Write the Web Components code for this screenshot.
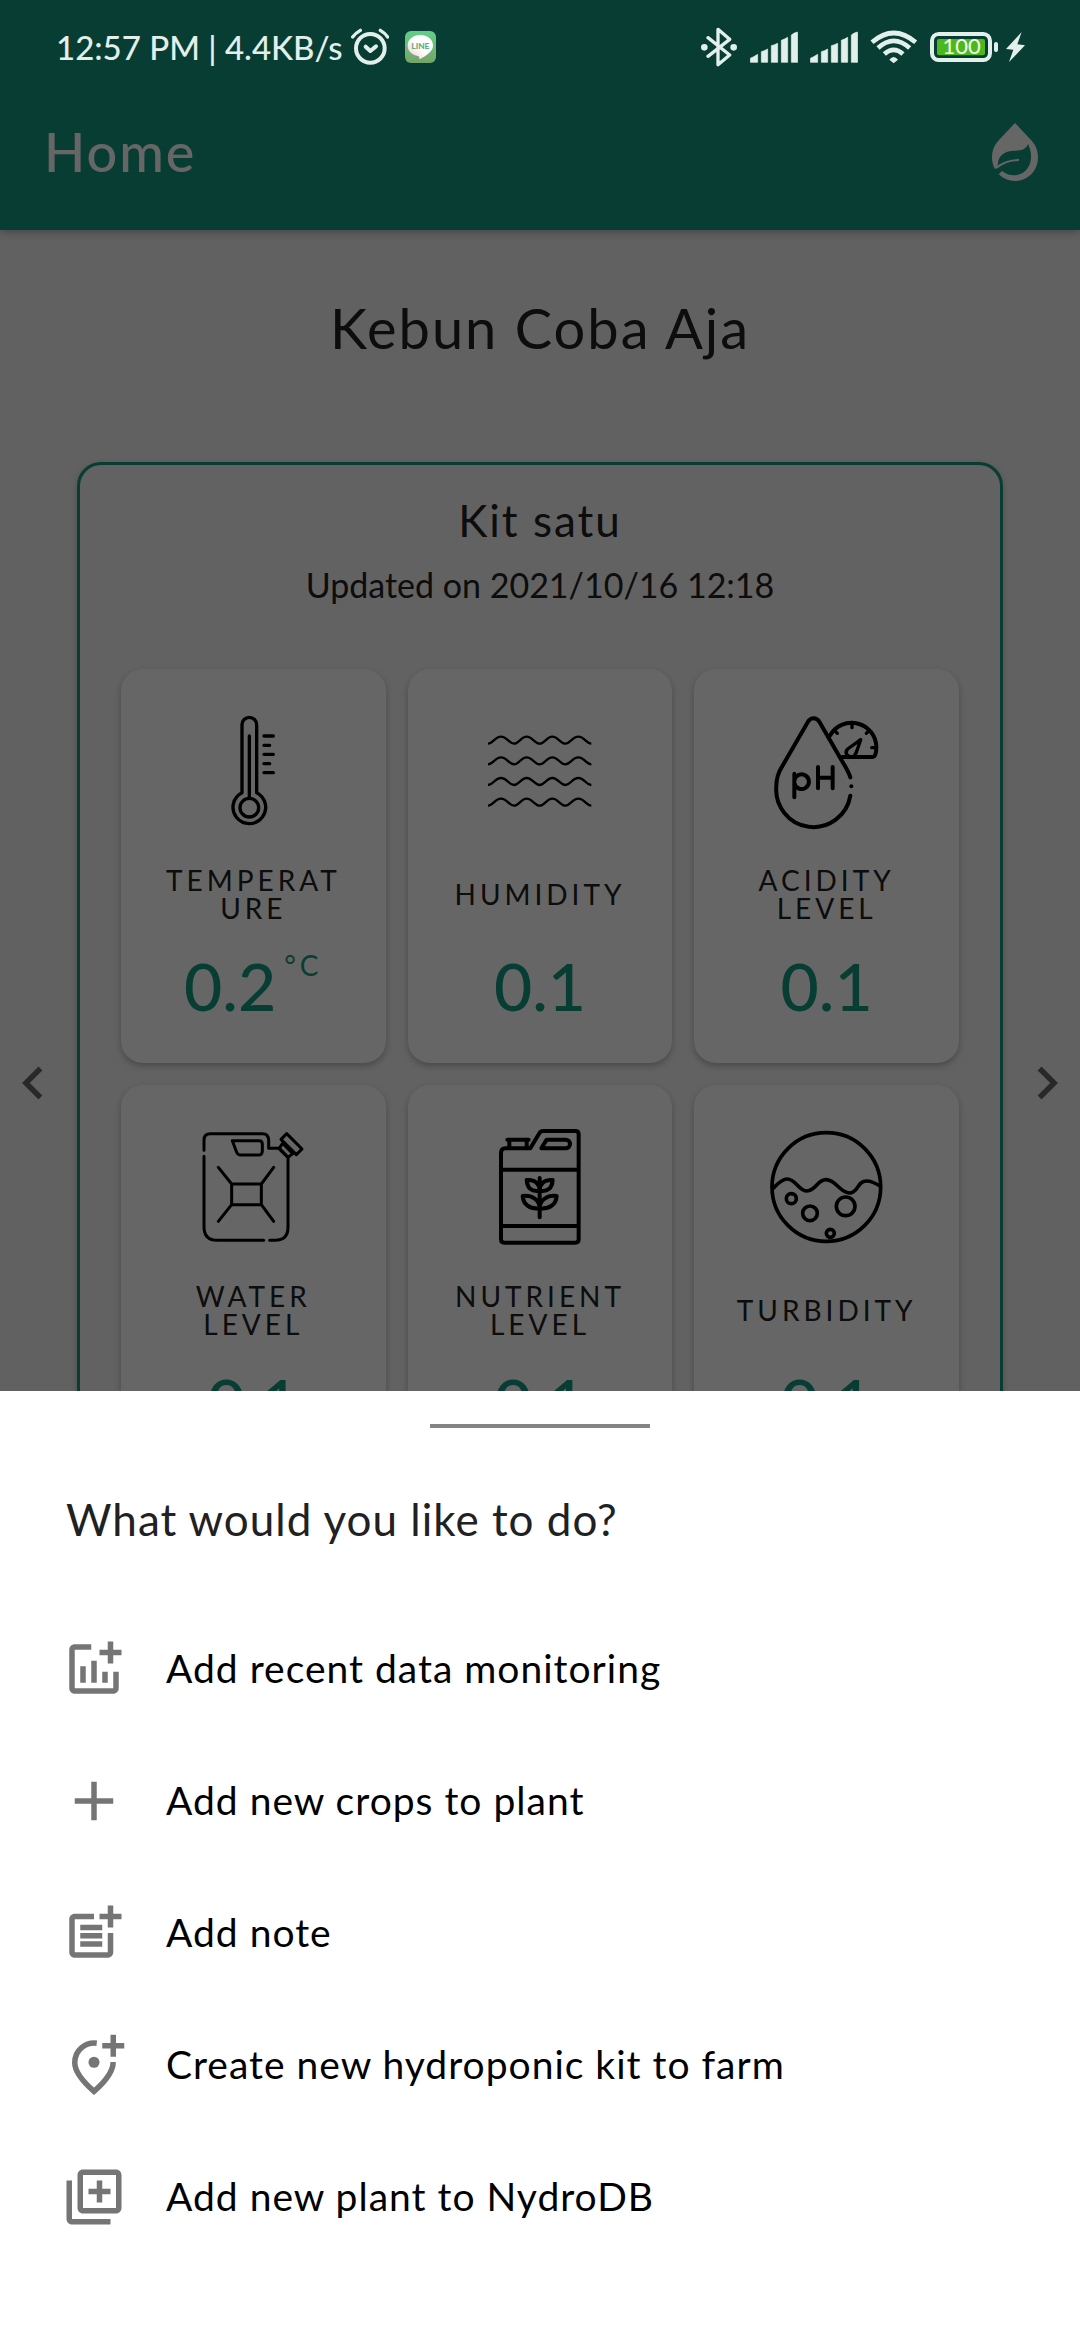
<!DOCTYPE html>
<html lang="en">
<head>
<meta charset="utf-8">
<meta name="viewport" content="width=device-width, initial-scale=1">
<title>Home</title>
<style>
  html, body { margin: 0; height: 100%; }
  body { font-family: Lato, "Open Sans", sans-serif; color: #212121; background: #f2f2f2; }
</style>
</head>
<body>
<nydro-app>
  <status-bar slot="status" time="12:57 PM" speed="4.4KB/s" battery="100"></status-bar>
  <app-bar slot="bar">Home</app-bar>
  <farm-view slot="page" name="Kebun Coba Aja">
    <kit-card name="Kit satu" updated="Updated on 2021/10/16 12:18">
      <metric-card label="Temperature" value="0.2" unit="°C">
        <svg viewBox="279 153 360 360" fill="none" stroke="#000" stroke-width="10" stroke-linecap="round" aria-hidden="true">
          <path d="M426 398V194a22 22 0 0 1 44 0V398a49 49 0 1 1-44 0Z" stroke-linejoin="round"/>
          <circle cx="448" cy="443" r="28"/><path d="M448 228V412"/>
          <path d="M492 228h28M492 256h17M492 283h28M492 311h17M492 338h28"/>
        </svg>
      </metric-card>
      <metric-card label="Humidity" value="0.1">
        <svg viewBox="238 153 360 360" fill="none" stroke="#000" stroke-width="7" aria-hidden="true">
          <path d="M262 251C277 251 283 230 301 230S325 251 340 251 361 230 378 230 402 251 417 251 438 230 455 230 479 251 494 251 515 230 533 230 557 251 572 251"/>
          <path d="M262 313C277 313 283 292 301 292S325 313 340 313 361 292 378 292 402 313 417 313 438 292 455 292 479 313 494 313 515 292 533 292 557 313 572 313"/>
          <path d="M262 375C277 375 283 354 301 354S325 375 340 375 361 354 378 354 402 375 417 375 438 354 455 354 479 375 494 375 515 354 533 354 557 375 572 375"/>
          <path d="M262 437C277 437 283 416 301 416S325 437 340 437 361 416 378 416 402 437 417 437 438 416 455 416 479 437 494 437 515 416 533 416 557 437 572 437"/>
        </svg>
      </metric-card>
      <metric-card label="Acidity Level" value="0.1">
        <svg viewBox="260 153 360 360" fill="none" stroke="#000" stroke-width="12" stroke-linecap="round" stroke-linejoin="round" aria-hidden="true">
          <path d="M510 352C504 334 496 322 488 308L417 185C409 171 391 171 383 185L305 320C295 336 288 354 288 378A112 113 0 0 0 510 407"/>
          <path d="M449 227A74 74 0 0 1 588 260C588 280 584 291 577 291H486"/>
          <path d="M515 187v16M464 213l7 7M565 213l-7 7M588 263h-14" stroke-width="10"/>
          <path d="M541 239L502 267C490 280 504 294 519 289C526 287 528 277 541 239Z" stroke-width="10"/>
          <path d="M342 341V412M342 362a22 22 0 1 1 0 6M413 321V385M457 321V385M413 353H457"/>
          <circle cx="513" cy="379" r="6" fill="#000" stroke="none"/>
        </svg>
      </metric-card>
      <metric-card label="Water Level" value="0.1">
        <svg viewBox="279 171 360 360" fill="none" stroke="#000" stroke-width="9" stroke-linecap="round" stroke-linejoin="round" aria-hidden="true">
          <path d="M312 241V210Q312 191 331 191H487Q506 191 506 211V235H536L564 262V472Q564 511 525 511H509M491 511H352Q312 511 312 471V259"/>
          <path d="M397 212H477Q487 212 487 222V242Q487 255 475 255H422Q414 255 410 247Z"/>
          <path d="M395 342H484V404H395ZM395 342L355 292M484 342L521 292M395 404L355 454M484 404L521 454"/>
          <path d="M560 191L606 237L589 254L543 208ZM550 216L538 235L564 262L582 248M552 224L574 247"/>
        </svg>
      </metric-card>
      <metric-card label="Nutrient Level" value="0.1">
        <svg viewBox="238 171 360 360" fill="none" stroke="#000" stroke-width="12" stroke-linecap="round" stroke-linejoin="round" aria-hidden="true">
          <path d="M301 250Q301 235 314 235H389L416 190Q420 183 428 183H524Q534 183 534 193V508Q534 518 524 518H311Q301 518 301 508ZM301 299H534M301 468H534M320 209H384M326 211V233M378 211V233"/>
          <path d="M438 209H495A13 13 0 0 1 495 235H422Z"/>
          <path d="M417 324V442M417 362C391 366 380 354 378 330C402 328 416 340 417 362ZM417 362C443 366 454 354 456 330C432 328 418 340 417 362ZM417 415C386 418 368 403 366 378C394 375 417 389 417 415ZM417 415C448 418 466 403 468 378C440 375 417 389 417 415Z"/>
        </svg>
      </metric-card>
      <metric-card label="Turbidity" value="0.1">
        <svg viewBox="260 171 360 360" fill="none" stroke="#000" stroke-width="11" aria-hidden="true">
          <circle cx="438" cy="351" r="163"/>
          <path d="M277 356C291 343 304 327 320 327C348 327 354 363 380 363C406 363 411 329 437 329C466 329 480 369 507 369C534 369 530 333 559 333C574 333 588 341 600 349"/>
          <circle cx="333" cy="386" r="15"/><circle cx="389" cy="430" r="22"/><circle cx="496" cy="409" r="28"/><circle cx="450" cy="490" r="12"/>
        </svg>
      </metric-card>
    </kit-card>
  </farm-view>
  <action-sheet slot="sheet" heading="What would you like to do?">
    <sheet-action>
      <svg slot="icon" viewBox="0 0 24 24" aria-hidden="true"><path d="M22 5v2h-3v3h-2V7h-3V5h3V2h2v3h3zm-3 14H5V5h6V3H5c-1.1 0-2 .9-2 2v14c0 1.1.9 2 2 2h14c1.1 0 2-.9 2-2v-6h-2v6zm-4-6v4h2v-4h-2zm-4 4h2V9h-2v8zm-2 0v-6H7v6h2z"/></svg>
      Add recent data monitoring
    </sheet-action>
    <sheet-action>
      <svg slot="icon" viewBox="0 0 24 24" aria-hidden="true"><path d="M19 13h-6v6h-2v-6H5v-2h6V5h2v6h6z"/></svg>
      Add new crops to plant
    </sheet-action>
    <sheet-action>
      <svg slot="icon" viewBox="0 0 24 24" aria-hidden="true"><path d="M17 19H5V7h7V5H5c-1.1 0-2 .9-2 2v12c0 1.1.9 2 2 2h12c1.1 0 2-.9 2-2v-7h-2zM19 2h-2v3h-3v2h3v3h2V7h3V5h-3zM7 9h8v2H7zM7 12h8v2H7zM7 15h8v2H7z"/></svg>
      Add note
    </sheet-action>
    <sheet-action>
      <svg slot="icon" viewBox="0 0 24 24" aria-hidden="true"><path d="M20 1v3h3v2h-3v3h-2V6h-3V4h3V1z"/><circle cx="12" cy="11" r="2"/><path d="M13 4.06C9 3.6 5 6.400 5 11.200C5 14 7.200 17.400 12 21.600C16.800 17.400 19 14 18.960 10.900" fill="none" stroke="currentColor" stroke-width="2"/></svg>
      Create new hydroponic kit to farm
    </sheet-action>
    <sheet-action>
      <svg slot="icon" viewBox="0 0 24 24" aria-hidden="true"><path d="M4 6H2v14c0 1.1.9 2 2 2h14v-2H4V6zm16-4H8c-1.1 0-2 .9-2 2v12c0 1.1.9 2 2 2h12c1.1 0 2-.9 2-2V4c0-1.1-.9-2-2-2zm0 14H8V4h12v12zm-7-2h2v-3h3V9h-3V6h-2v3h-3v2h3z"/></svg>
      Add new plant to NydroDB
    </sheet-action>
  </action-sheet>
</nydro-app>

<script>
  class Base extends HTMLElement {
    connectedCallback() {
      if (this.shadowRoot) return;
      this.attachShadow({ mode: 'open' }).innerHTML = this.render();
    }
    a(name) { return this.getAttribute(name) || ''; }
  }

  // Screen frame: page at the back, then scrim, then status bar and sheet.
  customElements.define('nydro-app', class extends Base {
    render() {
      return `<style>
        :host { --green: #169880; display: block; position: relative; height: 100vh; overflow: hidden; background: #f2f2f2; }
        main { display: flex; flex-direction: column; }
        .scrim { position: absolute; inset: 0; background: rgba(0, 0, 0, .6); }
        .status { position: absolute; top: 0; left: 0; right: 0; }
        .sheet { position: absolute; bottom: 0; left: 0; right: 0; }
      </style>
      <main><slot name="bar"></slot><slot name="page"></slot></main>
      <div class="scrim"></div>
      <div class="status"><slot name="status"></slot></div>
      <div class="sheet"><slot name="sheet"></slot></div>`;
    }
  });

  customElements.define('status-bar', class extends Base {
    render() {
      const bars = '<path d="M265 188V176Q275 172 287 164V188ZM298 188V156Q307 154 317 148V188ZM328 188V138Q337 136 347 131V188ZM358 188V122Q367 119 377 113V188ZM388 188V106Q396 99 407 97V188Z" fill="currentColor" stroke="currentColor" stroke-width="2" stroke-linejoin="round"/>';
      return `<style>
        :host { display: flex; align-items: center; justify-content: space-between; box-sizing: border-box; height: 77px; padding: 17px 55px 0 56px; color: #e3efeb; font-size: 33px; font-weight: 500; line-height: 40px; }
        div { display: flex; align-items: center; }
        svg { display: block; flex: none; }
        .left { gap: 8px; } .left svg + svg { margin-left: 8px; }
        .right { gap: 12px; }
        .cell { gap: 8px; }
        text { font-family: Lato, sans-serif; }
      </style>
      <div class="left">
        <span>${this.a('time')} | ${this.a('speed')}</span>
        <svg width="38" height="38" viewBox="1018 84 114 114" fill="none" stroke="currentColor" stroke-width="12" stroke-linecap="round" stroke-linejoin="round"><circle cx="1076" cy="145" r="43"/><path d="M1062 140L1076 153L1093 139"/><path d="M1023 111Q1032 99 1046 91M1106 91Q1120 99 1128 111" stroke-width="10"/></svg>
        <svg width="31" height="32" viewBox="1179 93 93 96"><defs><linearGradient id="g" x2="0" y2="1"><stop stop-color="#62cf87"/><stop offset="1" stop-color="#75a467"/></linearGradient><linearGradient id="p" x1="1" x2="0" y2="1"><stop offset=".5" stop-color="#fff"/><stop offset="1" stop-color="#f7c3d4"/></linearGradient></defs><rect x="1179" y="93" width="93" height="96" rx="18" fill="url(#g)"/><path d="M1225 105C1247 105 1263 118 1263 137C1263 155 1240 168 1223 178C1221 173 1223 170 1218 168C1200 165 1187 153 1187 137C1187 118 1203 105 1225 105Z" fill="url(#p)"/><text x="1225" y="147" font-size="25" font-weight="900" text-anchor="middle" fill="#5fae7d">LINE</text></svg>
      </div>
      <div class="right">
        <svg width="37" height="40" viewBox="117 80 111 120" fill="none" stroke="currentColor" stroke-width="10" stroke-linejoin="round" stroke-linecap="round"><path d="M138 112L203 164L168 193V87L203 117L138 168"/><circle cx="127" cy="141" r="5"/><circle cx="215" cy="141" r="5"/></svg>
        <svg width="48" height="32" viewBox="264 94 144 96">${bars}</svg>
        <svg width="48" height="32" viewBox="264 94 144 96">${bars}</svg>
        <svg width="48" height="36" viewBox="624 88 144 108" fill="none" stroke="currentColor" stroke-width="14"><path d="M630 128Q695 72 761 128M648 145Q695 102 743 145M667 163Q695 138 723 163"/><path d="M682 180Q695 164 708 180L695 191Z" fill="currentColor" stroke="none"/></svg>
        <div class="cell">
          <svg width="68" height="30" viewBox="810 96 204 90"><rect x="816" y="102" width="174" height="78" rx="20" fill="none" stroke="currentColor" stroke-width="12"/><rect x="831" y="117" width="144" height="49" rx="6" fill="#4cb81d"/><rect x="1002" y="126" width="12" height="30" rx="6" fill="currentColor"/><text x="905" y="162" font-size="66" font-weight="400" text-anchor="middle" fill="#f2ffe8">${this.a('battery')}</text></svg>
          <svg width="19" height="30" viewBox="1038 97 57 90"><path d="M1085 97L1038 148L1060 150L1047 187L1095 137L1072 134Z" fill="currentColor"/></svg>
        </div>
      </div>`;
    }
  });

  customElements.define('app-bar', class extends Base {
    render() {
      return `<style>
        :host { display: flex; align-items: center; justify-content: space-between; height: 149px; padding: 77px 42px 4px 44px; background: var(--green); color: #fff; box-shadow: 0 2px 8px rgba(0, 0, 0, .3); position: relative; }
        h1 { margin: 0; font-size: 54px; line-height: 64px; font-weight: 500; letter-spacing: 2px; }
        button { all: unset; display: block; }
        svg { display: block; }
      </style>
      <h1><slot></slot></h1>
      <button aria-label="Plants"><svg width="46" height="58" viewBox="0 0 46 58">
        <path d="M23 0L39 17C44 22 46 28 46 35A23 23 0 0 1 0 35C0 28 2 22 7 17Z" fill="currentColor"/>
        <path d="M36 21C33 29 25 27 19 28C11 29 6 34 6 41C5 44 4 45 2 48L6 52L10 48C16 53 25 54 32 49C40 43 41 31 36 21Z" fill="var(--green)"/>
        <path d="M4 45Q14 37 27 37" fill="none" stroke="currentColor" stroke-width="2"/>
      </svg></button>`;
    }
  });

  customElements.define('farm-view', class extends Base {
    render() {
      return `<style>
        :host { display: flex; flex-direction: column; }
        h2 { margin: 66px 0 102px; text-align: center; font-size: 56px; line-height: 64px; font-weight: 400; letter-spacing: 2px; }
        .row { display: flex; align-items: center; gap: 11px; }
        button { all: unset; flex: none; color: #666; }
        svg { display: block; }
        ::slotted(*) { flex: 1; }
      </style>
      <h2>${this.a('name')}</h2>
      <div class="row">
        <button aria-label="Previous kit"><svg width="66" height="66" viewBox="0 0 24 24" fill="currentColor"><path d="M15.410 7.410L14 6l-6 6 6 6 1.410-1.410L10.830 12z"/></svg></button>
        <slot></slot>
        <button aria-label="Next kit"><svg width="66" height="66" viewBox="0 0 24 24" fill="currentColor"><path d="M10 6L8.590 7.410 13.170 12l-4.580 4.590L10 18l6-6z"/></svg></button>
      </div>`;
    }
  });

  customElements.define('kit-card', class extends Base {
    render() {
      return `<style>
        :host { display: block; border: 3px solid var(--green); border-radius: 24px; padding: 27px 41px 222px; background: #f4f4f4; box-shadow: 0 2px 6px rgba(0, 0, 0, .2); }
        h3, p { margin: 0; text-align: center; font-weight: 400; }
        h3 { font-size: 44px; line-height: 56px; letter-spacing: 2px; }
        p { font-size: 34px; line-height: 40px; margin: 17px 0 64px; }
        .grid { display: grid; grid-template-columns: repeat(3, minmax(0, 1fr)); gap: 22px; }
      </style>
      <h3>${this.a('name')}</h3>
      <p>${this.a('updated')}</p>
      <div class="grid"><slot></slot></div>`;
    }
  });

  customElements.define('metric-card', class extends Base {
    render() {
      const unit = this.a('unit');
      return `<style>
        :host { display: flex; flex-direction: column; align-items: center; box-sizing: border-box; padding: 42px 40px 42px; background: #fff; border-radius: 22px; box-shadow: 0 3px 6px rgba(0, 0, 0, .25); }
        ::slotted(svg) { display: block; width: 120px; height: 120px; }
        .label { display: flex; align-items: center; justify-content: center; align-self: stretch; height: 56px; margin: 35px 0 29px; text-align: center; font-size: 28px; line-height: 28px; letter-spacing: 4px; text-transform: uppercase; overflow-wrap: anywhere; }
        .value { display: flex; align-items: flex-start; gap: 8px; height: 70px; color: var(--green); font-size: 66px; line-height: 70px; font-weight: 500; }
        .unit { font-size: 28px; line-height: 28px; letter-spacing: 4px; font-weight: 400; }
      </style>
      <slot></slot>
      <div class="label"><span>${this.a('label')}</span></div>
      <div class="value"><span>${this.a('value')}</span>${unit ? `<span class="unit">${unit}</span>` : ''}</div>`;
    }
  });

  customElements.define('action-sheet', class extends Base {
    render() {
      return `<style>
        :host { display: flex; flex-direction: column; background: #fff; padding: 33px 0 77px; }
        .handle { width: 220px; height: 4px; background: #858585; align-self: center; }
        h2 { margin: 63px 66px 56px; font-size: 44px; line-height: 56px; font-weight: 400; letter-spacing: 1px; }
      </style>
      <div class="handle"></div>
      <h2>${this.a('heading')}</h2>
      <slot></slot>`;
    }
  });

  customElements.define('sheet-action', class extends Base {
    render() {
      return `<style>
        :host { display: block; }
        button { all: unset; display: flex; align-items: center; gap: 39px; box-sizing: border-box; width: 100%; height: 132px; padding: 0 61px; color: #000; font-size: 39px; line-height: 48px; letter-spacing: 1px; }
        ::slotted(svg) { display: block; flex: none; width: 66px; height: 66px; fill: currentColor; color: #757575; }
        span { padding-bottom: 2px; }
      </style>
      <button><slot name="icon"></slot><span><slot></slot></span></button>`;
    }
  });
</script>
</body>
</html>
